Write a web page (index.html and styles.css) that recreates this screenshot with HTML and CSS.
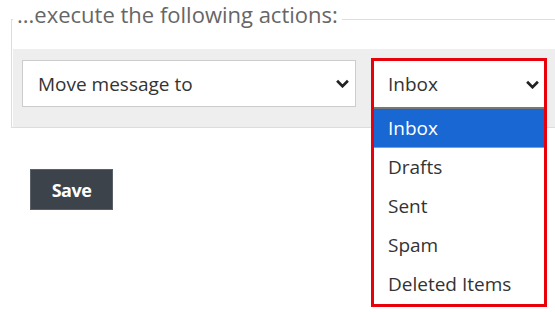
FILE: index.html
```html
<!DOCTYPE html>
<html lang="en">
<head>
  <meta charset="UTF-8">
  <meta name="viewport" content="width=device-width, initial-scale=1.0">
  <title>Filter actions</title>
  <link rel="stylesheet" href="styles.css">
</head>
<body>
  <div class="page">
    <fieldset class="actions">
      <legend>...execute the following actions:</legend>
      <div class="action-row">
        <div class="select select-action">
          <span>Move message to</span>
          <svg class="chevron" viewBox="0 0 16 10" width="15" height="9"><path d="M2 2 L8 8 L14 2" fill="none" stroke="#222" stroke-width="3"/></svg>
        </div>
        <div class="dropdown-slot">
          <div class="dropdown">
            <div class="select dropdown-toggle">
              <span>Inbox</span>
              <svg class="chevron" viewBox="0 0 16 10" width="15" height="9"><path d="M2 2 L8 8 L14 2" fill="none" stroke="#222" stroke-width="3"/></svg>
            </div>
            <ul class="dropdown-menu">
              <li class="active">Inbox</li>
              <li>Drafts</li>
              <li>Sent</li>
              <li>Spam</li>
              <li>Deleted Items</li>
            </ul>
          </div>
        </div>
      </div>
    </fieldset>
    <button class="btn-save">Save</button>
  </div>
</body>
</html>
```
FILE: styles.css
```css
html,
body {
  height: 100%;
}

body {
  margin: 0;
  background-color: #ffffff;
  font-family: 'Open Sans', 'DejaVu Sans', sans-serif;
  color: #333333;
}

.page {
  min-height: 100%;
  box-sizing: border-box;
  padding: 0 0 0 11px;
}

.actions {
  margin: 0;
  padding: 11px 0 0 1px;
  border: 1px solid #dddddd;
  border-right: none;
  min-width: 0;
}

.actions legend {
  padding: 0 4px 10px 4px;
  font-size: 22px;
  line-height: 28px;
  color: #666666;
}

.action-row {
  display: flex;
  align-items: flex-start;
  gap: 18px;
  background-color: #eeeeee;
  padding: 11px 9px 20px 9px;
}

.select {
  display: flex;
  align-items: center;
  justify-content: space-between;
  box-sizing: border-box;
  height: 47px;
  background-color: #ffffff;
  font-size: 19px;
  color: #333333;
}

.select-action {
  width: 334px;
  border: 1px solid #cccccc;
  padding: 0 5px 0 15px;
}

.dropdown-slot {
  position: relative;
  width: 170px;
  height: 47px;
}

.dropdown {
  position: absolute;
  top: -2px;
  left: -3px;
  width: 170px;
  border: 3px solid #e8000b;
  background-color: #ffffff;
}

.dropdown-toggle {
  height: 46px;
  padding: 0 4px 0 14px;
}

.dropdown-menu {
  list-style: none;
  margin: 0;
  padding: 0;
  border-top: 2px solid #777777;
}

.dropdown-menu li {
  height: 39px;
  line-height: 38px;
  padding-left: 14px;
  font-size: 19px;
  color: #333333;
}

.dropdown-menu li.active {
  background-color: #1967d2;
  color: #ffffff;
  box-sizing: border-box;
  border-bottom: 1px solid #6fa3e8;
}

.btn-save {
  margin: 41px 0 0 19px;
  width: 83px;
  height: 41px;
  border: 1px solid #5a6068;
  background-color: #3d434b;
  color: #ffffff;
  font-family: 'Open Sans', sans-serif;
  font-weight: bold;
  font-size: 18px;
  letter-spacing: -0.5px;
  padding: 0;
}
```
